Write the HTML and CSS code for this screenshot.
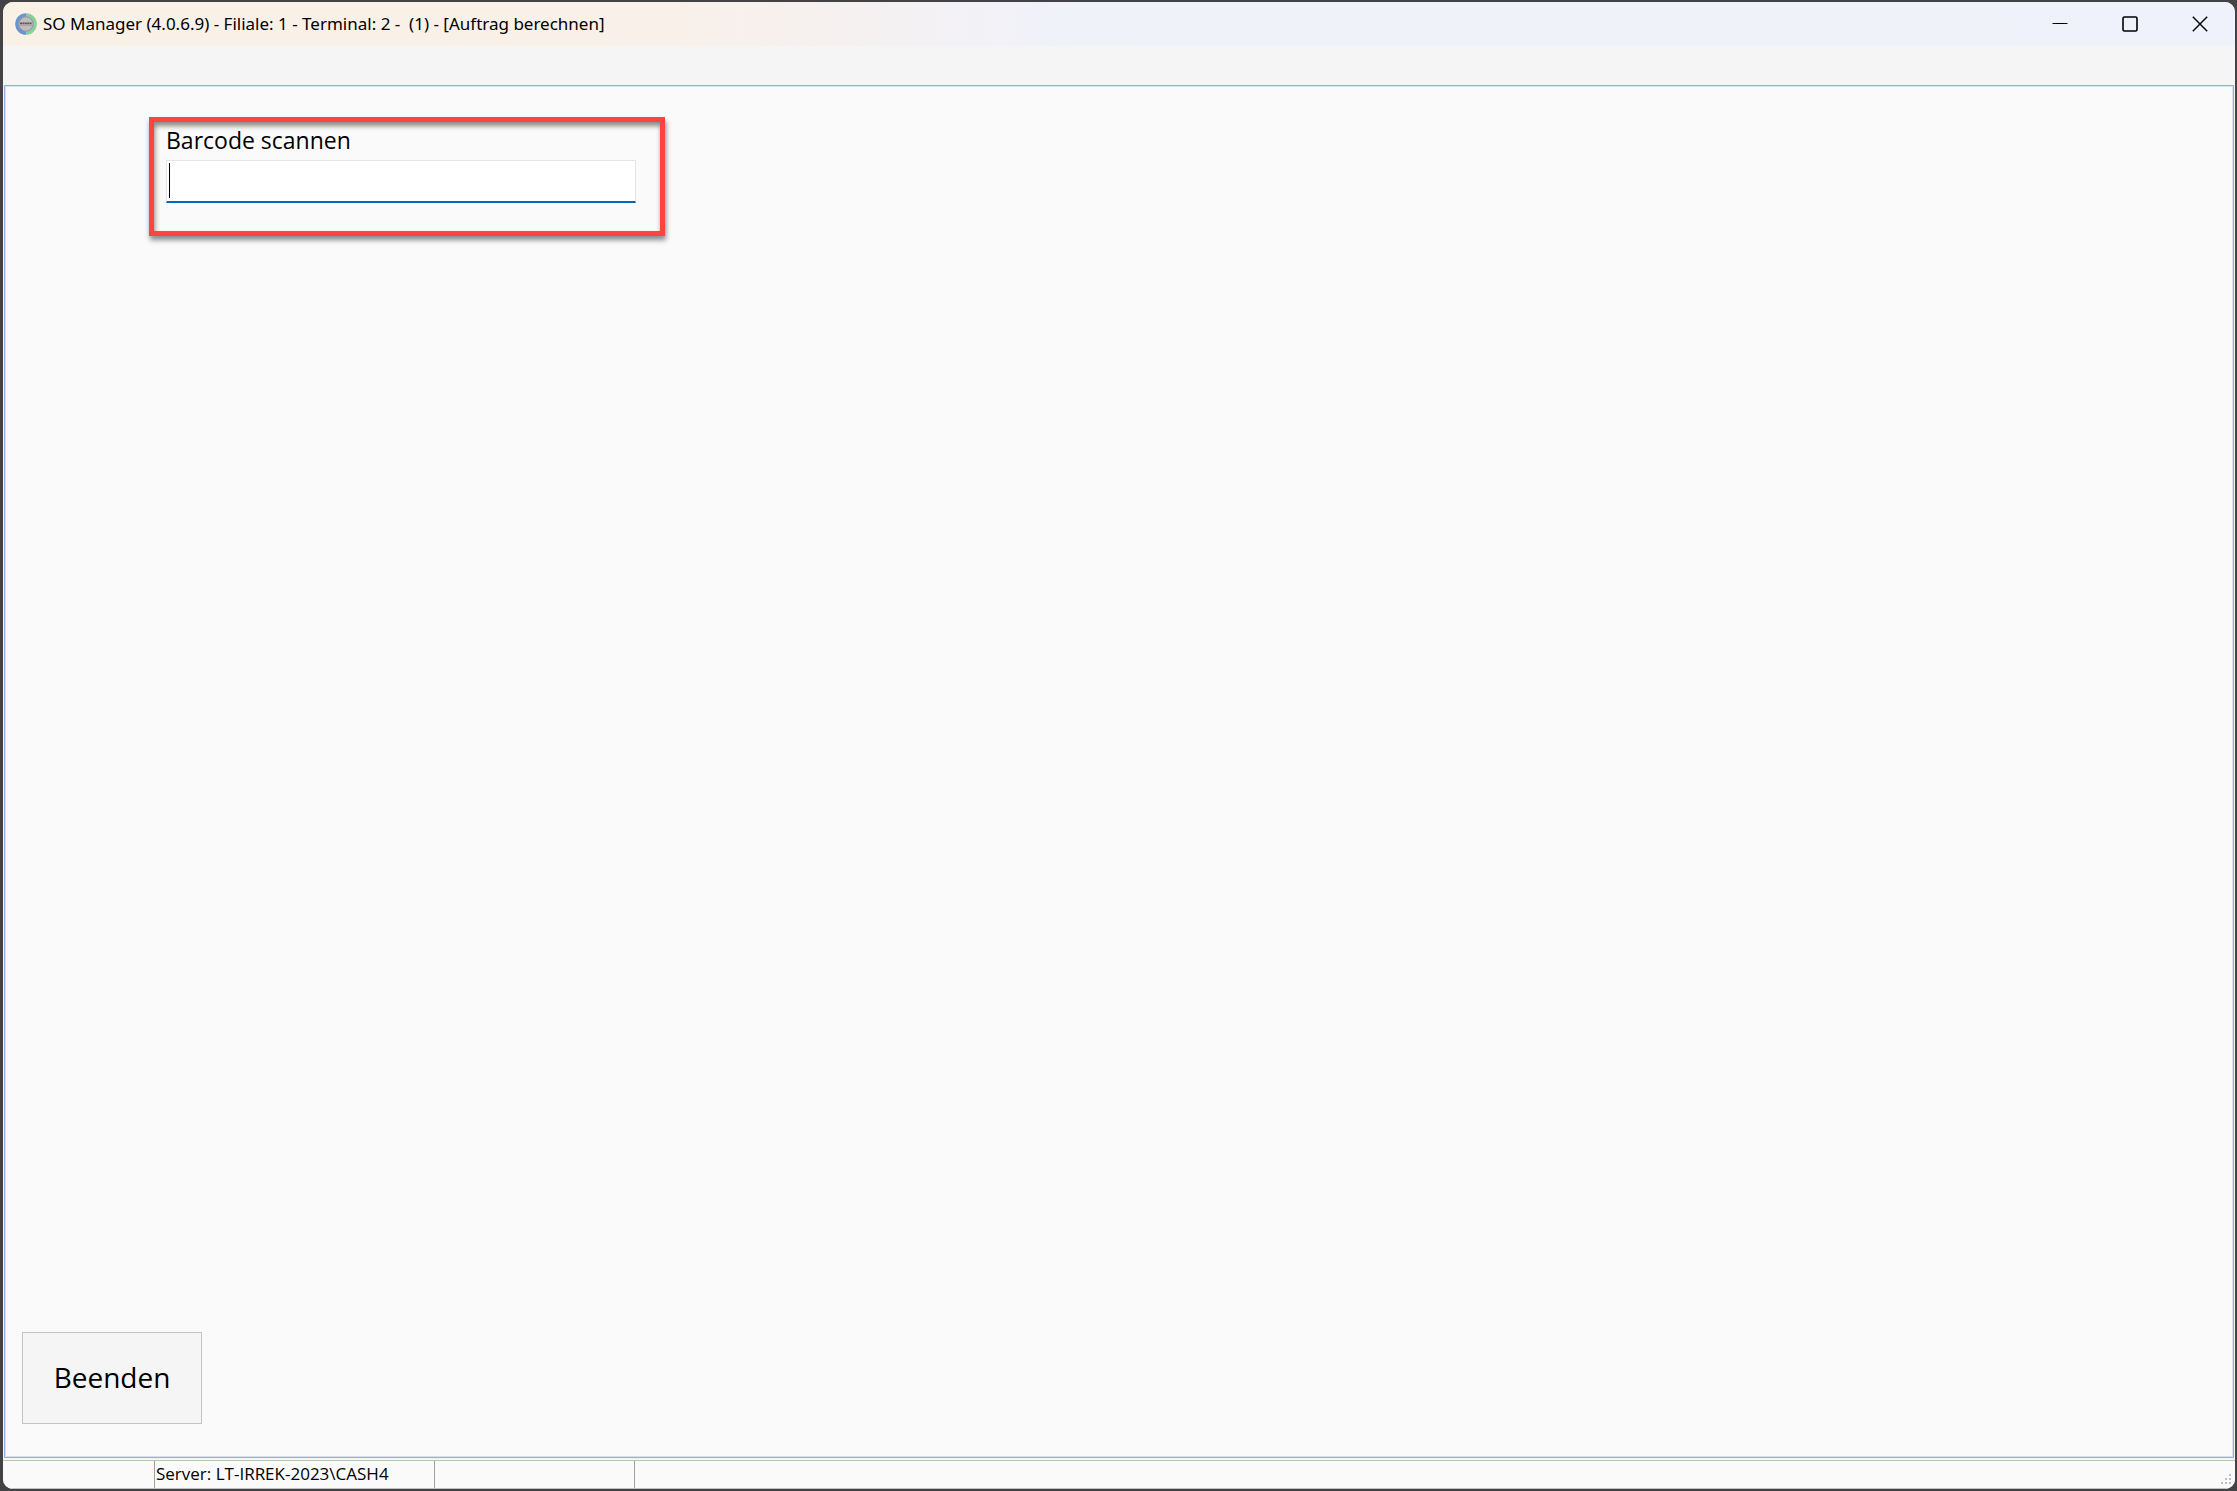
FILE: index.html
```html
<!DOCTYPE html>
<html lang="de">
<head>
  <meta charset="UTF-8">
  <meta name="viewport" content="width=device-width, initial-scale=1.0">
  <title>SO Manager</title>
  <link rel="stylesheet" href="styles.css">
</head>
<body>
  <div class="window">
    <header class="titlebar">
      <svg class="app-icon" width="22" height="22" viewBox="0 0 22 22" aria-hidden="true">
        <circle cx="11" cy="11" r="9" fill="#bfbfc2"/>
        <path d="M11 1.8a9.2 9.2 0 0 0 0 18.4" fill="none" stroke="#6b94d2" stroke-width="3.2"/>
        <path d="M11 1.8a9.2 9.2 0 0 1 0 18.4" fill="none" stroke="#86d09b" stroke-width="3.2"/>
        <circle cx="11" cy="11" r="7.2" fill="#bdbdc0" stroke="#8e9298" stroke-width="1"/>
        <path d="M5 10.3h12" stroke="#55555a" stroke-width="1.8" stroke-dasharray="2 .4"/>
        <path d="M5 12.3h12" stroke="#c58f93" stroke-width="1"/>
      </svg>
      <h1 class="title">SO Manager (4.0.6.9) - Filiale: 1 - Terminal: 2 -&nbsp; (1) - [Auftrag berechnen]</h1>
      <div class="window-buttons">
        <button type="button" aria-label="Minimieren">
          <svg width="16" height="16" viewBox="0 0 16 16"><path d="M.5 7.5h15" stroke="#000"/></svg>
        </button>
        <button type="button" aria-label="Maximieren">
          <svg width="16" height="16" viewBox="0 0 16 16"><rect x="1" y="1" width="14" height="14" rx="1.5" fill="none" stroke="#000" stroke-width="1.6"/></svg>
        </button>
        <button type="button" aria-label="Schließen">
          <svg width="16" height="16" viewBox="0 0 16 16"><path d="M.8.8l14.4 14.4M15.2.8L.8 15.2" stroke="#000" stroke-width="1.4"/></svg>
        </button>
      </div>
    </header>

    <div class="menubar"></div>

    <main class="content">
      <div class="scan-box">
        <label for="barcode">Barcode scannen</label>
        <div class="field">
          <input type="text" id="barcode" autocomplete="off">
          <span class="caret"></span>
        </div>
      </div>
      <button type="button" class="exit-btn">Beenden</button>
    </main>

    <footer class="statusbar">
      <div class="panel panel-first"></div>
      <div class="panel panel-server">Server: LT-IRREK-2023\CASH4</div>
      <div class="panel panel-empty"></div>
      <svg class="grip" width="10" height="10" viewBox="0 0 10 10" fill="#c0c0c0" aria-hidden="true">
        <path d="M8 0h2v2H8zM4 4h2v2H4zM8 4h2v2H8zM0 8h2v2H0zM4 8h2v2H4zM8 8h2v2H8z"/>
      </svg>
    </footer>
  </div>
</body>
</html>
```
FILE: styles.css
```css
* {
  box-sizing: border-box;
}
body {
  margin: 0;
  height: 100vh;
  padding: 2px 2px 2px 3px;
  background-color: #434345;
  font-family: "Open Sans", "Noto Sans", sans-serif;
  color: #000;
}
.window {
  height: 100%;
  display: flex;
  flex-direction: column;
  background-color: #f5f5f5;
  border-radius: 10px;
  overflow: hidden;
}
.titlebar {
  height: 44px;
  display: flex;
  align-items: center;
  padding: 0 0 1px 12px;
  background: linear-gradient(to right, #f9f1e6 0%, #f9f0e9 30%, #f0f2fa 48%, #eff2fa 100%);
}
.title {
  margin: 0 0 0 6px;
  flex: 1;
  font-family: "Noto Sans", "Open Sans", sans-serif;
  font-size: 17px;
  font-weight: 400;
  line-height: 22px;
  white-space: nowrap;
}
.window-buttons {
  display: flex;
  height: 100%;
}
.window-buttons button {
  width: 70px;
  padding: 0;
  border: none;
  background: none;
  display: flex;
  align-items: center;
  justify-content: center;
}
.menubar {
  height: 39px;
}
.content {
  flex: 1;
  margin: 0 1px 2px;
  padding: 31px 17px 33px;
  border: 1px solid #8fb0e0;
  box-shadow: inset 0 0 0 1px #d3e1f5;
  background-color: #fafafa;
  display: flex;
  flex-direction: column;
  justify-content: space-between;
  align-items: flex-start;
}
.scan-box {
  width: 516px;
  margin-left: 127px;
  padding: 3px 24px 28px 12px;
  border: 5px solid #ff4343;
  box-shadow: 1px 4px 5px rgba(0,0,0,0.45), inset 1px 4px 5px rgba(0,0,0,0.45);
}
.scan-box label {
  display: block;
  padding-bottom: 5px;
  font-size: 23px;
  line-height: 30px;
}
.field {
  position: relative;
}
.field input {
  display: block;
  width: 100%;
  height: 43px;
  padding: 0 4px;
  border: 1px solid #e5e5e8;
  border-bottom: 2px solid #0067c0;
  background-color: #fff;
  font-family: inherit;
  font-size: 23px;
  outline: none;
}
.caret {
  position: absolute;
  left: 3px;
  top: 3px;
  width: 1px;
  height: 35px;
  background-color: #000;
}
.exit-btn {
  width: 180px;
  height: 92px;
  padding: 0 0 2px;
  border: 1px solid #c3c3c3;
  background-color: #f5f5f5;
  color: #000;
  font-family: inherit;
  font-size: 28px;
}
.statusbar {
  height: 29px;
  display: flex;
  border-top: 1px solid #c0c0c0;
  border-bottom: 1px solid #c0c0c0;
  background-color: #fafafa;
}
.panel {
  border-right: 1px solid #a0a0a0;
  font-size: 17px;
  line-height: 26px;
  white-space: nowrap;
}
.panel-first {
  width: 152px;
}
.panel-server {
  width: 280px;
  padding-left: 1px;
}
.panel-empty {
  width: 200px;
}
.grip {
  margin: auto 4px 4px auto;
}
```
